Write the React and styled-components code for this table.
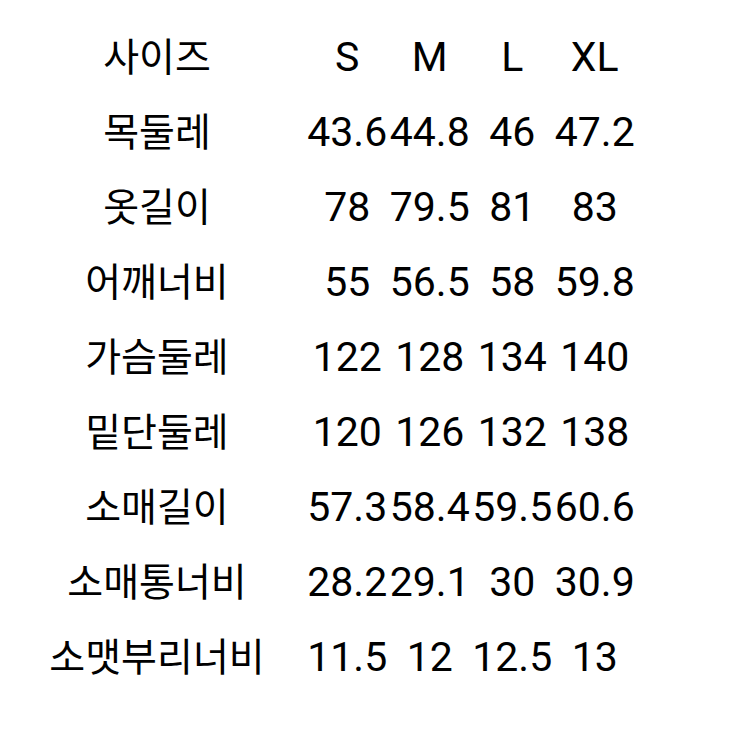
import React from "react";
import styled, { createGlobalStyle } from "styled-components";

const sizes = ["S", "M", "L", "XL"];

const rows = [
    { label: "목둘레", values: ["43.6", "44.8", "46", "47.2"] },
    { label: "옷길이", values: ["78", "79.5", "81", "83"] },
    { label: "어깨너비", values: ["55", "56.5", "58", "59.8"] },
    { label: "가슴둘레", values: ["122", "128", "134", "140"] },
    { label: "밑단둘레", values: ["120", "126", "132", "138"] },
    { label: "소매길이", values: ["57.3", "58.4", "59.5", "60.6"] },
    { label: "소매통너비", values: ["28.2", "29.1", "30", "30.9"] },
    { label: "소맷부리너비", values: ["11.5", "12", "12.5", "13"] },
];

export default function App() {
    return (
        <>
            <GlobalStyle />
            <Page>
                <Table>
                    <Row>
                        <Label>사이즈</Label>
                        {sizes.map((s) => (
                            <Cell key={s}>{s}</Cell>
                        ))}
                    </Row>
                    {rows.map((r) => (
                        <Row key={r.label}>
                            <Label>{r.label}</Label>
                            {r.values.map((v, i) => (
                                <Cell key={i}>{v}</Cell>
                            ))}
                        </Row>
                    ))}
                </Table>
            </Page>
        </>
    );
}

const GlobalStyle = createGlobalStyle`
    html, body {
        margin: 0;
        padding: 0;
        background: #fff;
    }
`;
const Page = styled.div`
    width: 744px;
    height: 746px;
    background: #fff;
    overflow: hidden;
`;
const Table = styled.div`
    display: flex;
    flex-direction: column;
    padding: 17px 0 0 40px;
`;
const Row = styled.div`
    display: grid;
    grid-template-columns: 266px repeat(4, 82.5px);
    align-items: baseline;
    height: 75px;
    line-height: 75px;
    color: #000;
`;
const Label = styled.div`
    font-family: "Noto Sans CJK KR", "Noto Sans", sans-serif;
    font-size: 39px;
    text-align: center;
    padding-right: 32px;
    white-space: nowrap;
`;
const Cell = styled.div`
    font-family: Roboto, "Noto Sans", sans-serif;
    font-size: 41px;
    text-align: center;
    white-space: nowrap;
    display: flex;
    justify-content: center;
`;
